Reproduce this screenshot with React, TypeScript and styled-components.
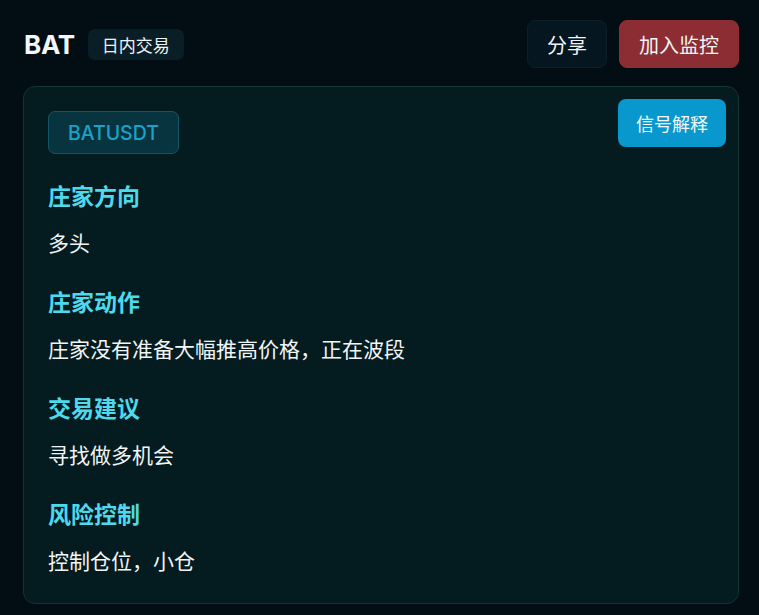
import React from "react";
import styled, { createGlobalStyle } from "styled-components";

const Global = createGlobalStyle`
  html, body { margin: 0; padding: 0; background: #020d14; }
  body { font-family: Inter, "Noto Sans CJK SC", sans-serif; color: #f2f6f8; }
  * { box-sizing: border-box; }
`;

const Page = styled.div`
  width: 759px;
  height: 615px;
  padding: 20px 20px 0 23px;
  background: #020d14;
  overflow: hidden;
`;

const Header = styled.header`
  display: flex;
  align-items: center;
  justify-content: space-between;
  height: 48px;
  margin-bottom: 18px;
`;

const TitleGroup = styled.div`
  display: flex;
  align-items: center;
  gap: 13px;
  padding-left: 1px;
`;

const Title = styled.h1`
  margin: 0;
  font-size: 26px;
  font-weight: 700;
  letter-spacing: -0.3px;
  color: #f4f7f9;
`;

const Tag = styled.span`
  display: inline-flex;
  align-items: center;
  height: 31px;
  padding: 0 14px;
  border-radius: 7px;
  background: #0a1e28;
  font-size: 17px;
  color: #eef3f5;
`;

const Actions = styled.div`
  display: flex;
  gap: 12px;
`;

const Button = styled.button<{ $variant: "ghost" | "danger" }>`
  height: 48px;
  padding: 0 19px;
  border-radius: 8px;
  font-family: inherit;
  font-size: 20px;
  color: #f3f5f6;
  cursor: pointer;
  border: 1px solid ${(p) => (p.$variant === "ghost" ? "#0c1f28" : "#8b2d33")};
  background: ${(p) => (p.$variant === "ghost" ? "#051620" : "#8b2d33")};
`;

const Card = styled.section`
  position: relative;
  width: 716px;
  height: 518px;
  padding: 24px 24px 0;
  border: 1px solid #0f3534;
  border-radius: 12px;
  background: #041b1f;
`;

const Explain = styled.button`
  position: absolute;
  top: 12px;
  right: 12px;
  height: 48px;
  padding: 0 18px;
  border: none;
  border-radius: 8px;
  background: #0898cd;
  color: #f4f8fa;
  font-family: inherit;
  font-size: 18px;
  cursor: pointer;
`;

const Symbol = styled.div`
  display: inline-flex;
  align-items: center;
  height: 43px;
  padding: 0 19px;
  border: 1px solid #175566;
  border-radius: 7px;
  background: #083440;
  color: #1ba2c8;
  font-size: 19.5px;
  font-weight: 500;
  margin-bottom: 27px;
`;

const Sections = styled.div`
  display: flex;
  flex-direction: column;
  gap: 28px;
`;

const Section = styled.div`
  display: flex;
  flex-direction: column;
  gap: 16px;
`;

const Heading = styled.h2`
  margin: 0;
  font-size: 23px;
  line-height: 32px;
  font-weight: 700;
  color: #4fd9ec;
`;

const Body = styled.p`
  margin: 0;
  font-size: 21px;
  line-height: 30px;
  color: #f2f5f6;
`;

const items = [
  { h: "庄家方向", b: "多头" },
  { h: "庄家动作", b: "庄家没有准备大幅推高价格，正在波段" },
  { h: "交易建议", b: "寻找做多机会" },
  { h: "风险控制", b: "控制仓位，小仓" },
];

export default function App() {
  return (
    <>
      <Global />
      <Page>
        <Header>
          <TitleGroup>
            <Title>BAT</Title>
            <Tag>日内交易</Tag>
          </TitleGroup>
          <Actions>
            <Button $variant="ghost">分享</Button>
            <Button $variant="danger">加入监控</Button>
          </Actions>
        </Header>
        <Card>
          <Explain>信号解释</Explain>
          <Symbol>BATUSDT</Symbol>
          <Sections>
            {items.map((it) => (
              <Section key={it.h}>
                <Heading>{it.h}</Heading>
                <Body>{it.b}</Body>
              </Section>
            ))}
          </Sections>
        </Card>
      </Page>
    </>
  );
}
